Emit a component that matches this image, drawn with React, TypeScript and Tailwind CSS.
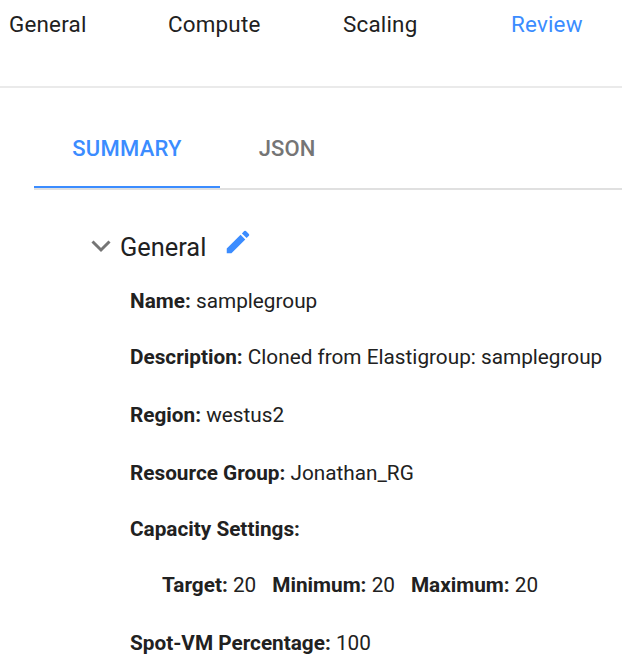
import React from "react";

const nav = [
  { label: "General", box: "w-[159px]" },
  { label: "Compute", box: "w-[175px]" },
  { label: "Scaling", box: "w-[168px]" },
  { label: "Review", box: "text-[#3b8cff]" },
];

function Row({ label, value, box }: { label: string; value?: string; box: string }) {
  return (
    <div className={`flex items-center whitespace-pre ${box}`}>
      <span className="font-bold">{label}</span>
      {value && <span> {value}</span>}
    </div>
  );
}

export default function App() {
  return (
    <div className="h-[672px] w-[622px] overflow-hidden bg-white font-[Roboto,sans-serif] text-[#212121]">
      <nav className="flex h-[88px] border-b-2 border-[#eaeaea] pl-[9px] text-[22.400px] leading-[48px] tracking-[0.2px]">
        {nav.map((n) => (
          <div key={n.label} className={n.box}>{n.label}</div>
        ))}
      </nav>
      <div className="pl-[34px]">
        <div className="flex h-[102px] border-b-2 border-[#e0e0e0] pt-[20px] text-[22px] font-medium">
          <div className="flex h-[80px] w-[186px] items-center justify-center border-b-2 border-[#3b8cff] pt-[2px] tracking-[0.25px] text-[#3b8cff]">SUMMARY</div>
          <div className="flex h-[80px] w-[134px] items-center justify-center tracking-[0.1px] text-[#757575]">JSON</div>
        </div>
      </div>
      <section className="pl-[130px] text-[20.750px]">
        <div className="-ml-[40px] flex h-[83px] pt-[32px] text-[25.400px] leading-[50px]">
          <svg className="mt-[16px] h-[16px] w-[22px]" viewBox="0 0 22 16" fill="none" stroke="#757575" strokeWidth="3"><path d="M2.5 3.5 11 12l8.500-8.500" /></svg>
          <span className="ml-[8px] w-[102.500px]">General</span>
          <svg className="mt-[5px] h-[30px] w-[30px]" viewBox="0 0 24 24" fill="#3b8cff"><path d="M3 17.250V21h3.750L17.810 9.940l-3.750-3.750L3 17.250zM20.710 7.040a1 1 0 0 0 0-1.410l-2.340-2.340a1 1 0 0 0-1.410 0l-1.830 1.830 3.750 3.750 1.830-1.830z" /></svg>
        </div>
        <Row label="Name:" value="samplegroup" box="h-[58px]" />
        <Row label="Description:" value="Cloned from Elastigroup: samplegroup" box="h-[54px]" />
        <Row label="Region:" value="westus2" box="h-[62px]" />
        <Row label="Resource Group:" value="Jonathan_RG" box="h-[54px]" />
        <Row label="Capacity Settings:" box="h-[58px]" />
        <div className="flex h-[54px] gap-4 pl-8">
          <Row label="Target:" value="20" box="" />
          <Row label="Minimum:" value="20" box="" />
          <Row label="Maximum:" value="20" box="" />
        </div>
        <Row label="Spot-VM Percentage:" value="100" box="h-[62px]" />
      </section>
    </div>
  );
}
